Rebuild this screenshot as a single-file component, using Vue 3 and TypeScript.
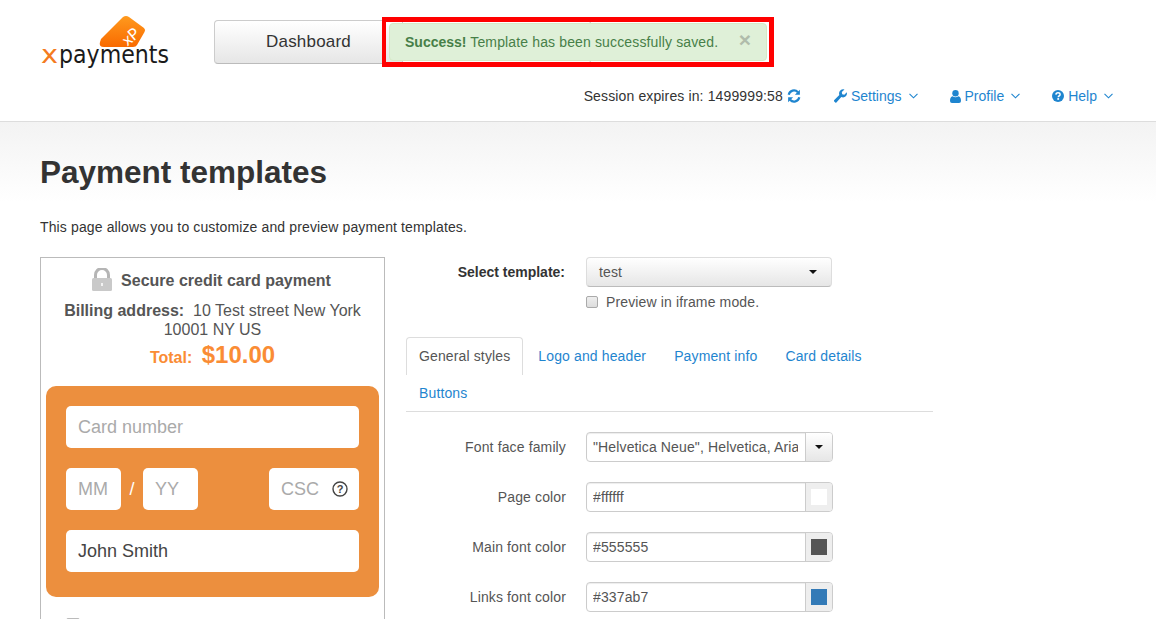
<script setup lang="ts">
const navLinks = [
  { label: 'Settings', icon: 'wrench' },
  { label: 'Profile', icon: 'user' },
  { label: 'Help', icon: 'help' },
]
const tabs = ['General styles', 'Logo and header', 'Payment info', 'Card details', 'Buttons']
const colorRows = [
  { label: 'Page color', value: '#ffffff' },
  { label: 'Main font color', value: '#555555' },
  { label: 'Links font color', value: '#337ab7' },
]
</script>

<template>
  <div class="page">
    <header class="header">
      <div class="top-row">
        <svg class="logo" width="132" height="56" viewBox="0 0 132 56" aria-label="xpayments">
          <defs>
            <linearGradient id="tag" x1="0" y1="0" x2="0" y2="1">
              <stop offset="0" stop-color="#ff9a1e" />
              <stop offset="1" stop-color="#f96a00" />
            </linearGradient>
          </defs>
          <path d="M60 24 L82 2 Q85 0 88 2 L103 13 Q105 15 103.500 17 L96 30 Q95 32 92 32 L63 32 Q57.500 32 59 27 Z" fill="url(#tag)" />
          <text class="logo-xp" x="90" y="27" text-anchor="middle" transform="rotate(-40 90 22)">xP</text>
          <text class="logo-word logo-x" x="0" y="48" transform="scale(1.2 1)">x</text>
          <text class="logo-word" x="18" y="48" textLength="110" lengthAdjust="spacingAndGlyphs">payments</text>
        </svg>
        <div class="btn-group">
          <div class="nav-btn">Dashboard</div>
          <div class="nav-btn nav-btn-second"></div>
        </div>
      </div>
      <div class="sub-row">
        <span class="session">Session expires in: 1499999:58</span>
        <svg class="refresh" width="14" height="14" viewBox="0 0 14 14">
          <path d="M1.700 5.700A5.300 5.300 0 0 1 10.900 3.300" fill="none" stroke="#1f85cf" stroke-width="2.200" />
          <path d="M12.900 0.800V5.800H7.900Z" fill="#1f85cf" />
          <path d="M12.300 8.300A5.300 5.300 0 0 1 3.100 10.700" fill="none" stroke="#1f85cf" stroke-width="2.200" />
          <path d="M1.100 13.200V8.200H6.100Z" fill="#1f85cf" />
        </svg>
        <a v-for="link in navLinks" :key="link.label" class="nav-link">
          <svg v-if="link.icon === 'wrench'" width="13" height="14" viewBox="0 0 13 14">
            <path d="M1.300 13.500 L0 12.200 Q-0.300 11.600 0.300 11 L5.300 6 Q4.500 3 6.300 1.400 Q8.200 -0.200 10.500 0.500 L7.800 3 L8.200 5.200 L10.300 5.700 L12.800 3.200 Q13.400 5.600 11.800 7.300 Q10 9 7.300 8.100 L2.400 13.400 Q1.800 13.900 1.300 13.500Z" fill="#1f85cf" />
          </svg>
          <svg v-else-if="link.icon === 'user'" width="11" height="13" viewBox="0 0 11 13">
            <circle cx="5.500" cy="3.300" r="3.200" fill="#1f85cf" />
            <path d="M0 11 Q0 6.700 2.600 6.300 Q5.500 8.200 8.400 6.300 Q11 6.700 11 11 Q11 13 9 13 H2 Q0 13 0 11Z" fill="#1f85cf" />
          </svg>
          <svg v-else width="12" height="12" viewBox="0 0 12 12">
            <circle cx="6" cy="6" r="6" fill="#1f85cf" />
            <path d="M3.900 4.600 Q4 2.800 6 2.800 Q8.100 2.800 8.100 4.500 Q8.100 5.400 7 6 Q6.300 6.400 6.300 7.200" fill="none" stroke="#fff" stroke-width="1.500" />
            <rect x="5.300" y="8.100" width="1.800" height="1.700" fill="#fff" />
          </svg>
          <span>{{ link.label }}</span>
          <svg class="chevron" width="9" height="6" viewBox="0 0 9 6">
            <path d="M0.500 0.800 L4.500 4.800 L8.500 0.800" fill="none" stroke="#1f85cf" stroke-width="1.100" />
          </svg>
        </a>
      </div>
      <div class="alert-frame">
        <div class="alert">
          <span class="alert-text"><strong>Success!</strong> Template has been successfully saved.</span>
          <span class="close">×</span>
        </div>
      </div>
    </header>

    <main class="main">
      <h1 class="title">Payment templates</h1>
      <p class="intro">This page allows you to customize and preview payment templates.</p>
      <div class="columns">
        <section class="preview">
          <div class="secure">
            <svg width="20" height="23" viewBox="0 0 20 23">
              <path d="M3.500 11V7A6.500 6.500 0 0 1 16.500 7V11" fill="none" stroke="#b5b5b5" stroke-width="3" />
              <rect x="0" y="10" width="20" height="13" rx="1.500" fill="#c9c9c9" />
              <path d="M10 15v3" stroke="#fff" stroke-width="1.500" />
            </svg>
            <strong>Secure credit card payment</strong>
          </div>
          <div class="billing"><strong>Billing address:</strong>&nbsp; 10 Test street New York 10001 NY US</div>
          <div class="total"><strong>Total:</strong> <b>$10.00</b></div>
          <div class="card">
            <div class="field placeholder">Card number</div>
            <div class="card-row">
              <div class="field small placeholder">MM</div>
              <span class="slash">/</span>
              <div class="field small placeholder">YY</div>
              <div class="field csc placeholder">
                <span>CSC</span>
                <svg width="16" height="16" viewBox="0 0 16 16">
                  <circle cx="8" cy="8" r="7" fill="none" stroke="#444" stroke-width="1.400" />
                  <text x="8" y="11.600" text-anchor="middle" class="q">?</text>
                </svg>
              </div>
            </div>
            <div class="field">John Smith</div>
          </div>
          <div class="mini-check"></div>
        </section>

        <section class="settings">
          <div class="select-row">
            <label class="select-label">Select template:</label>
            <div class="select-group">
              <div class="select-btn"><span>test</span><i class="caret"></i></div>
              <div class="check-row"><span class="checkbox"></span>Preview in iframe mode.</div>
            </div>
          </div>
          <nav class="tabs">
            <a v-for="(tab, i) in tabs" :key="tab" class="tab" :class="{ active: i === 0 }">{{ tab }}</a>
          </nav>
          <div class="form-row">
            <label>Font face family</label>
            <div class="input-group">
              <span class="input-text clipped">"Helvetica Neue", Helvetica, Arial</span>
              <span class="addon addon-btn"><i class="caret"></i></span>
            </div>
          </div>
          <div v-for="row in colorRows" :key="row.label" class="form-row">
            <label>{{ row.label }}</label>
            <div class="input-group">
              <span class="input-text">{{ row.value }}</span>
              <span class="addon"><i class="swatch" :style="{ background: row.value }"></i></span>
            </div>
          </div>
        </section>
      </div>
    </main>
  </div>
</template>

<style>
html, body { margin: 0; padding: 0; background: #fff; overflow: hidden; }
</style>

<style scoped>
.page {
  width: 1156px;
  height: 619px;
  overflow: hidden;
  font-family: "Liberation Sans", Arial, sans-serif;
  font-size: 14px;
  color: #555;
  background: #fff;
}
.header {
  position: relative;
  height: 121px;
  border-bottom: 1px solid #ddd;
  box-sizing: content-box;
}
.top-row {
  display: flex;
  align-items: flex-start;
  padding: 20px 0 0 41px;
  height: 44px;
}
.logo { margin-top: -5px; flex: none; overflow: visible; }
.logo-word { font-family: "DejaVu Sans", sans-serif; font-size: 24px; fill: #1a1a1a; }
.logo-x { fill: #f47b20; }
.logo-xp { font-family: "Lato", sans-serif; font-size: 16px; fill: #fff; }
.btn-group { display: flex; margin-left: 41px; }
.nav-btn {
  width: 189px;
  height: 44px;
  box-sizing: border-box;
  border: 1px solid #ccc;
  border-bottom-color: #bbb;
  border-radius: 4px 0 0 4px;
  background: linear-gradient(#fff, #e6e6e6);
  color: #333;
  font-size: 17px;
  letter-spacing: 0.2px;
  line-height: 42px;
  text-align: center;
}
.nav-btn-second {
  margin-left: -1px;
  border-radius: 0 4px 4px 0;
  background: #fff;
}
.sub-row {
  display: flex;
  align-items: center;
  justify-content: flex-end;
  height: 24px;
  margin-top: 20px;
  padding-right: 43px;
  color: #333;
}
.session, .intro, .tab, .check-row, .form-row, .select-btn { letter-spacing: 0.13px; }
.refresh { margin-left: 4px; margin-right: 33px; }
.nav-link {
  display: flex;
  align-items: center;
  gap: 4px;
  color: #1f85cf;
  margin-left: 32px;
}
.refresh + .nav-link { margin-left: 0; }
.chevron { margin-left: 3px; }
.alert-frame {
  position: absolute;
  left: 382px;
  top: 17px;
  width: 392px;
  height: 50px;
  box-sizing: border-box;
  border: 5px solid #f00;
  border-left-width: 4px;
  padding: 1px 0 0 3px;
}
.alert {
  display: flex;
  justify-content: space-between;
  width: 378px;
  height: 38px;
  box-sizing: border-box;
  padding: 0 15px 0 15px;
  line-height: 37px;
  font-size: 14px;
  background: #dff0d8;
  border: 1px solid #d6e9c6;
  border-radius: 4px;
  color: #477f48;
}
.alert-text { letter-spacing: 0.14px; }
.alert-text strong { letter-spacing: 0; }
.close {
  font-size: 21px;
  font-weight: bold;
  line-height: 32px;
  color: #b0bcab;
}
.main {
  height: 497px;
  padding: 0 40px;
  background: linear-gradient(#f3f3f3, #fff 80px);
  overflow: hidden;
}
.title {
  margin: 31px 0 0;
  font-size: 31.5px;
  line-height: 38px;
  font-weight: bold;
  color: #333;
}
.intro {
  margin: 26px 0 0;
  line-height: 20px;
  color: #333;
}
.columns {
  display: flex;
  align-items: flex-start;
  gap: 21px;
  margin-top: 20px;
}
.preview {
  flex: none;
  width: 345px;
  box-sizing: border-box;
  border: 1px solid #bbb;
  height: 400px;
  padding: 11px 5px 0;
  font-size: 16px;
  background: #fff;
}
.secure {
  display: flex;
  align-items: center;
  justify-content: center;
  gap: 9px;
  height: 24px;
  margin-left: -2px;
}
.secure svg { margin-top: -3px; }
.billing {
  margin-top: 8px;
  padding: 0 10px;
  line-height: 19px;
  text-align: center;
}
.total {
  margin-top: 2px;
  text-align: center;
  color: #fa8c34;
  line-height: 28px;
}
.total b { font-size: 24px; margin-left: 5px; }
.card {
  display: flex;
  flex-direction: column;
  gap: 20px;
  margin-top: 14px;
  width: 333px;
  height: 211px;
  box-sizing: border-box;
  padding: 20px;
  background: #ec8f3e;
  border-radius: 10px;
}
.field {
  height: 42px;
  box-sizing: border-box;
  padding: 0 12px;
  line-height: 42px;
  font-size: 18px;
  color: #444;
  background: #fff;
  border-radius: 5px;
}
.placeholder { color: #aaa; }
.card-row { display: flex; align-items: center; }
.small { width: 55px; }
.slash { width: 22px; text-align: center; color: #fff; font-size: 18px; }
.csc {
  display: flex;
  align-items: center;
  justify-content: space-between;
  width: 90px;
  margin-left: auto;
  padding-right: 11px;
}
.q { font: bold 11px "Liberation Sans", sans-serif; fill: #444; }
.mini-check {
  width: 12px;
  height: 12px;
  margin: 21px 0 0 20px;
  border: 1px solid #bbb;
  border-radius: 2px;
  background: #eee;
}
.settings { flex: none; width: 527px; }
.select-row { display: flex; }
.select-label {
  width: 159px;
  margin-top: 5px;
  text-align: right;
  font-weight: bold;
  color: #333;
  line-height: 20px;
}
.select-group { margin-left: 21px; }
.select-btn {
  display: flex;
  align-items: center;
  justify-content: space-between;
  width: 246px;
  height: 30px;
  box-sizing: border-box;
  padding: 0 14px 0 12px;
  border: 1px solid #ddd;
  border-bottom-color: #bbb;
  border-radius: 4px;
  background: linear-gradient(#fff, #e6e6e6);
  color: #555;
}
.caret {
  display: block;
  width: 0;
  height: 0;
  border-top: 4px solid #111;
  border-left: 4px solid transparent;
  border-right: 4px solid transparent;
}
.check-row {
  display: flex;
  align-items: center;
  gap: 8px;
  margin-top: 6px;
  line-height: 18px;
}
.checkbox {
  width: 12px;
  height: 12px;
  box-sizing: border-box;
  border: 1px solid #aaa;
  border-radius: 2px;
  background: linear-gradient(#eee, #ddd);
}
.tabs {
  display: flex;
  flex-wrap: wrap;
  width: 527px;
  margin-top: 26px;
  border-bottom: 1px solid #ddd;
}
.tab {
  box-sizing: border-box;
  height: 38px;
  padding: 0 13px;
  margin-right: 2px;
  line-height: 38px;
  color: #1f85cf;
  white-space: nowrap;
}
.tab:last-child { flex: none; height: 36px; line-height: 36px; }
.tab.active {
  padding: 0 12px;
  color: #555;
  border: 1px solid #ddd;
  border-bottom: 0;
  border-radius: 4px 4px 0 0;
  background: #fff;
  line-height: 37px;
}
.form-row {
  display: flex;
  align-items: center;
  height: 30px;
  margin-top: 20px;
}
.form-row label { width: 160px; text-align: right; }
.input-group {
  display: flex;
  width: 247px;
  height: 30px;
  box-sizing: border-box;
  margin-left: 20px;
  border: 1px solid #ccc;
  border-radius: 4px;
  overflow: hidden;
  background: #fff;
  box-shadow: inset 0 1px 1px rgba(0, 0, 0, 0.075);
}
.input-text {
  flex: 1;
  min-width: 0;
  margin: 0 6px;
  line-height: 28px;
  white-space: nowrap;
  overflow: hidden;
}
.clipped { margin-right: 7px; }
.addon {
  display: flex;
  align-items: center;
  justify-content: center;
  flex: none;
  width: 27px;
  box-sizing: border-box;
  border-left: 1px solid #ccc;
  background: #eee;
}
.addon-btn { background: linear-gradient(#fff, #e6e6e6); }
.swatch { display: block; width: 16px; height: 16px; }
</style>
